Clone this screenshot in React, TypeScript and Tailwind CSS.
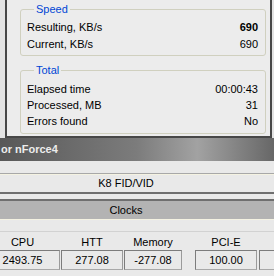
import React from "react";

const speed = [
  { label: "Resulting, KB/s", value: "690", bold: true },
  { label: "Current, KB/s", value: "690" },
];

const total = [
  { label: "Elapsed time", value: "00:00:43" },
  { label: "Processed, MB", value: "31" },
  { label: "Errors found", value: "No" },
];

const clocks = [
  { name: "CPU", value: "2493.75", w: "w-[75px]" },
  { name: "HTT", value: "277.08", w: "w-[62px]" },
  { name: "Memory", value: "-277.08", w: "w-[58px]" },
  { name: "PCI-E", value: "100.00", w: "w-[62px]" },
  { name: "", value: "", w: "w-[40px]" },
];

function Group({ title, rows, rowH, className }: { title: string; rows: { label: string; value: string; bold?: boolean }[]; rowH: string; className?: string }) {
  return (
    <fieldset className={`border border-[#d0d0bf] rounded-[3px] pl-[6px] pr-[7px] ${className ?? ""}`}>
      <legend className="ml-[7px] px-[2px] text-[#0046d5]">{title}</legend>
      {rows.map((r) => (
        <div key={r.label} className={`flex items-center justify-between ${rowH}`}>
          <span>{r.label}</span>
          <span className={r.bold ? "font-bold" : ""}>{r.value}</span>
        </div>
      ))}
    </fieldset>
  );
}

export default function App() {
  return (
    <div className="w-[274px] h-[276px] overflow-hidden bg-[#e3e3e3] font-['Liberation_Sans',Arial,sans-serif] text-[11px] leading-[13px] text-black">
      {/* progress window */}
      <div className="h-[138px] pl-[5px] pr-[2px]">
        <div className="h-full border-x-2 border-b-2 border-[#474747] bg-[#ececec] pl-[13px] pr-[4px] pt-[3px]">
          <Group title="Speed" rows={speed} rowH="h-[17px]" className="pt-[3px] pb-[2px]" />
          <Group title="Total" rows={total} rowH="h-[16px]" className="mt-[8px] pt-[4px] pb-[4px]" />
        </div>
      </div>

      {/* nForce4 window */}
      <div className="bg-[#e9e9e9] h-[138px]">
        <div className="h-[23px] flex items-center pl-[1px] font-bold text-[#ececec] bg-[linear-gradient(90deg,#585858_0%,#7c7c7c_50%,#a2a2a2_72%,#676767_100%)]">
          or nForce4
        </div>
        <div className="h-[12px]" />
        <div className="border-t border-[#a8a8a8]">
          <div className="border-t border-[#f4f2e2] h-[20px] flex items-center justify-center pr-[22px] border-b-2 border-b-[#6f6f6f]">
            K8 FID/VID
          </div>
        </div>
        <div className="h-[5px]" />
        <div className="border-t-2 border-[#6f6f6f] bg-[#b3b3b3] h-[21px] flex items-center justify-center pr-[22px] border-b border-b-[#f4f2e2]">
          Clocks
        </div>
        <div className="h-[11px]" />
        <div className="border-t border-[#d2d2d2] flex ml-[-15px]">
          {clocks.map((c, i) => (
            <div key={i} className={`flex flex-col shrink-0 ${c.w} ${i === 2 ? "mr-[13px]" : i === 3 ? "mr-[2px]" : "mr-[1px]"}`}>
              <div className="h-[18px] pt-[2px] flex items-center justify-center">{c.name}</div>
              <div className="h-[20px] flex items-center justify-center border border-[#7c7c7c] border-b-[#a8a8a8] border-r-[#9a9a9a]">
                {c.value}
              </div>
            </div>
          ))}
        </div>
      </div>
    </div>
  );
}
